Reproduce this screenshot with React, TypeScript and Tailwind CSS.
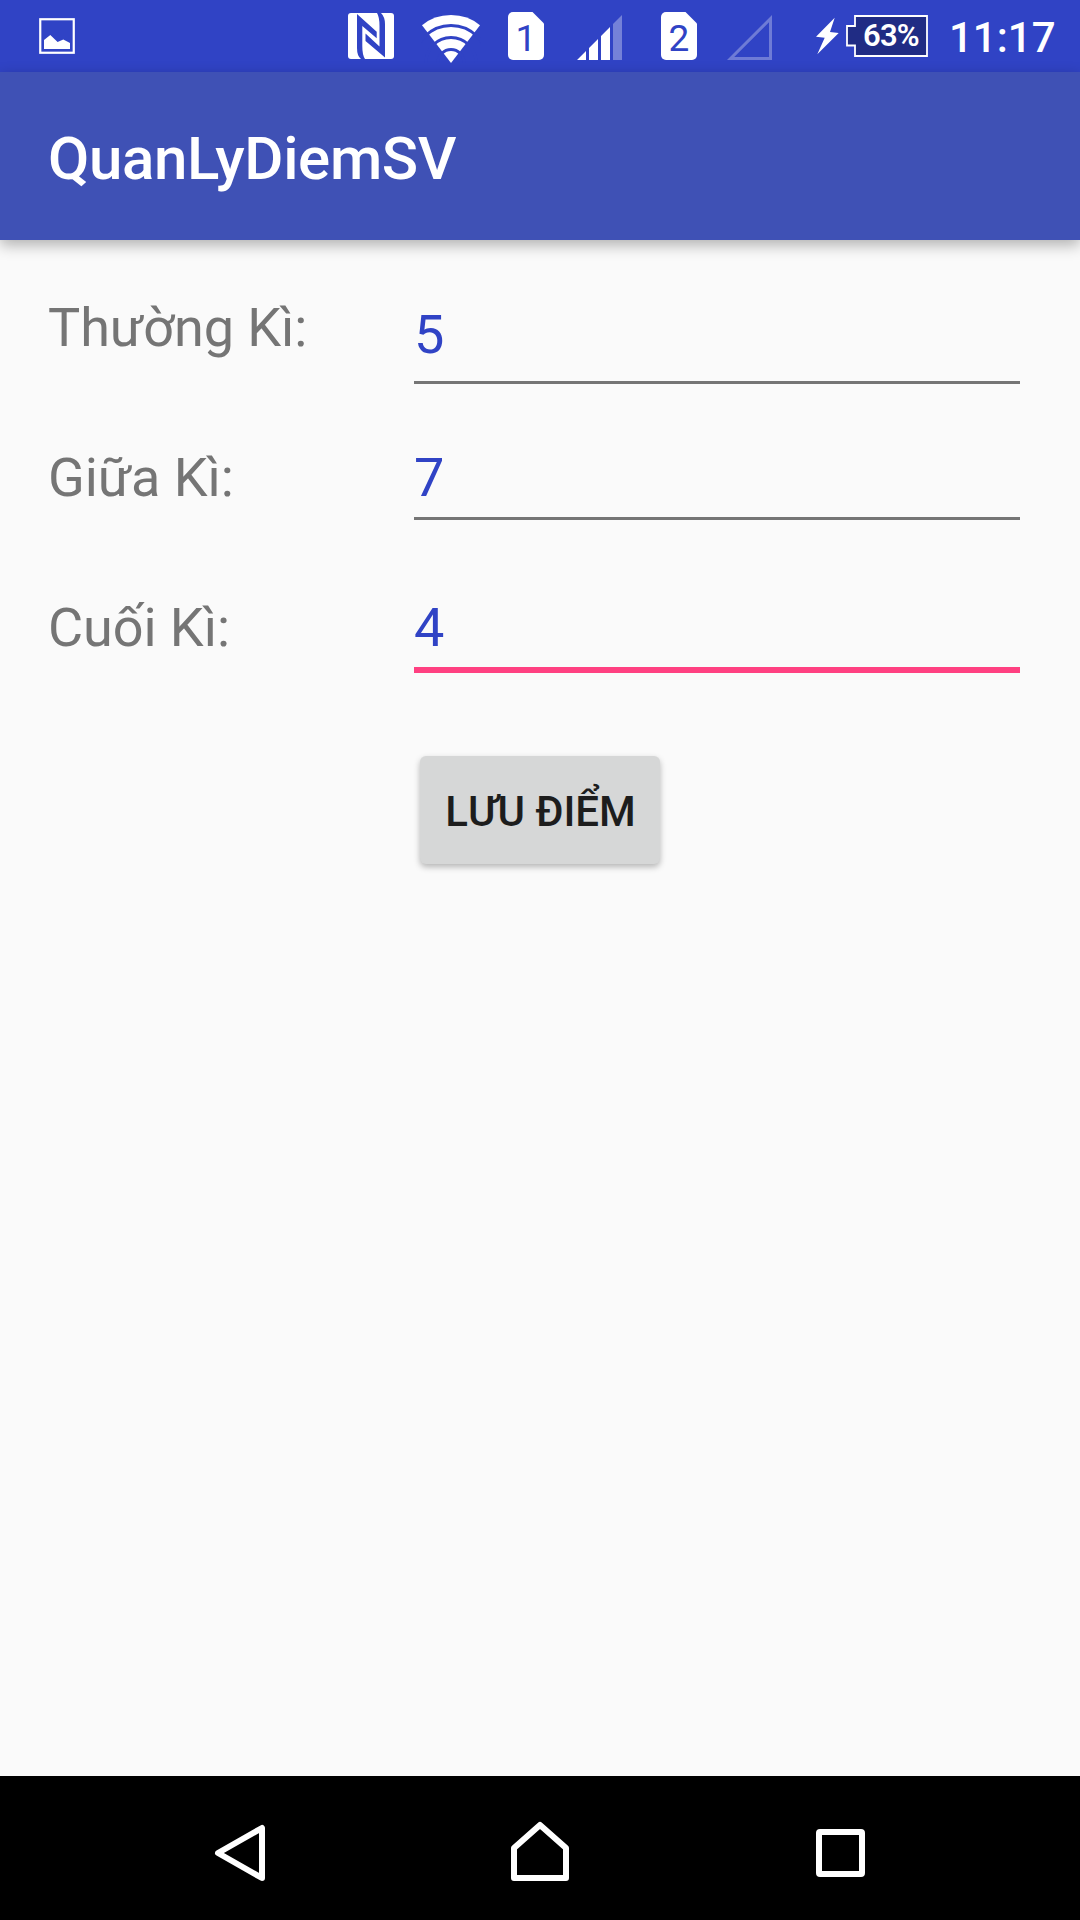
import React from "react";

function Sim({ n }: { n: string }) {
  return (
    <div className="relative h-12 w-9">
      <svg className="h-12 w-9" viewBox="0 0 36 48">
        <path d="M5 0H24.500L36 11.500V43a5 5 0 0 1-5 5H5a5 5 0 0 1-5-5V5a5 5 0 0 1 5-5z" fill="#fff" />
      </svg>
      <span className="absolute inset-0 pt-[3px] text-center text-[37px] leading-12 text-[#3043c5]">{n}</span>
    </div>
  );
}

function StatusBar() {
  return (
    <header className="flex h-[72px] bg-[#3043c5] text-white">
      <svg className="mt-[18px] ml-[39px] size-9" viewBox="0 0 36 36">
        <rect x="1.250" y="1.250" width="33.500" height="33.500" fill="none" stroke="#fff" strokeWidth="2.200" />
        <path d="M5 22l6.300-5 7.300 7 5.700-2.600L31 25v6H5z" fill="#fff" />
      </svg>
      <svg className="mt-[13px] ml-[273px] h-[46px] w-[46px]" viewBox="0 0 46 46">
        <rect width="46" height="46" rx="3" fill="#fff" />
        <path d="M9 1L28.700 18.700V25.300L14.300 13V33Q14.300 42 17 46H13Q9 43 9 35z" fill="#3043c5" />
        <path d="M37 44.500L17.500 28V20.500L31.500 33.500V13Q31.500 4 29 0H33Q37 4 37 11z" fill="#3043c5" />
      </svg>
      <svg className="mt-[14px] ml-[27px] h-[49px] w-[60px]" viewBox="0 0 60 49">
        <path d="M30 49L1 11.300Q13 1 30 1T59 11.300z" fill="#fff" />
        <g fill="none" stroke="#3043c5" strokeWidth="3">
          <circle cx="30" cy="48.500" r="37" />
          <circle cx="30" cy="48.500" r="25" />
          <circle cx="30" cy="48.500" r="13" />
        </g>
      </svg>
      <div className="mt-3 ml-[27px]"><Sim n="1" /></div>
      <svg className="mt-[15px] ml-[33px] h-[45px] w-[45px]" viewBox="0 0 45 45">
        <path d="M0 45L9 36V45zM12 33L21 24V45H12zM24 21L33 12V45H24z" fill="#fff" />
        <path d="M36 9L45 0V45H36z" fill="#fff" fillOpacity=".33" />
      </svg>
      <div className="mt-3 ml-[39px]"><Sim n="2" /></div>
      <svg className="mt-[15px] ml-[30px] h-[45px] w-[45px]" viewBox="0 0 45 45">
        <path d="M0 45L45 0V45zM7.200 42H42V7.200z" fill="#fff" fillOpacity=".3" fillRule="evenodd" />
      </svg>
      <svg className="mt-[17px] ml-[44px] h-[38px] w-[23px]" viewBox="0 0 23 38">
        <path d="M18.700 .7L0 19.700L8.700 20.700L1.300 37.300L22.700 16L14 15z" fill="#fff" />
      </svg>
      <div className="relative mt-[15px] ml-[7px] h-[42px] w-[82px]">
        <svg className="h-[42px] w-[82px]" viewBox="0 0 82 42">
          <path d="M9 1H81V41H9V30.500H1V11H9z" fill="#202c84" stroke="#fff" strokeWidth="1.800" />
        </svg>
        <span className="absolute top-0 left-[17px] text-[31px] leading-[42px] font-semibold tracking-[-0.8px]">63%</span>
      </div>
      <span className="ml-[21px] pt-[2px] text-[42px] leading-[72px] font-medium">11:17</span>
    </header>
  );
}

const rows = [
  { label: "Thường Kì:", value: "5", field: "pt-[7px]", line: "mt-[14px] h-[3px] bg-[#757575]" },
  { label: "Giữa Kì:", value: "7", field: "", line: "mt-[7px] h-[3px] bg-[#757575]" },
  { label: "Cuối Kì:", value: "4", field: "", line: "mt-[7px] h-[6px] bg-[#ff4081]" },
];

export default function App() {
  return (
    <div className="flex h-[1920px] w-[1080px] flex-col overflow-hidden bg-[#fafafa] font-['Roboto',sans-serif]">
      <StatusBar />
      <div className="z-10 flex h-[168px] shrink-0 items-center bg-[#3f51b5] pl-12 shadow-[0_5px_14px_rgba(0,0,0,0.3)]">
        <h1 className="pt-[6px] text-[60px] leading-[70px] font-medium tracking-[-0.35px] text-white">QuanLyDiemSV</h1>
      </div>
      <main className="flex-1 pt-14">
        {rows.map((r) => (
          <div key={r.label} className="flex h-[150px] pr-[60px] pl-12 text-[54px] leading-16">
            <label className="w-[366px] tracking-[-0.08px] text-[#757575]">{r.label}</label>
            <div className={`flex-1 ${r.field}`}>
              <div className="text-[#3043c5]">{r.value}</div>
              <div className={r.line} />
            </div>
          </div>
        ))}
        <button className="mx-auto mt-[10px] block h-[108px] w-[240px] rounded-[6px] bg-[#d6d7d7] pt-[3px] pl-px text-[42px] font-medium text-[#1d1d1d] shadow-[0_3px_6px_rgba(0,0,0,0.28)]">
          LƯU ĐIỂM
        </button>
      </main>
      <nav className="flex h-36 shrink-0 bg-black">
        <svg className="mt-[45px] ml-[211px] h-16 w-[58px]" viewBox="211 1821 58 64" fill="none" stroke="#fff" strokeWidth="6" strokeLinejoin="round">
          <path d="M218 1853L262 1828V1878z" />
        </svg>
        <svg className="mt-[45px] ml-[238px] h-16 w-[66px]" viewBox="507 1821 66 64" fill="none" stroke="#fff" strokeWidth="6" strokeLinejoin="round">
          <path d="M514 1878V1848L540 1825L566 1848V1878z" />
        </svg>
        <svg className="mt-[45px] ml-[239px] h-16 w-[58px]" viewBox="812 1821 58 64" fill="none" stroke="#fff" strokeWidth="6" strokeLinejoin="round">
          <rect x="819" y="1832" width="43" height="42" rx="1" />
        </svg>
      </nav>
    </div>
  );
}
